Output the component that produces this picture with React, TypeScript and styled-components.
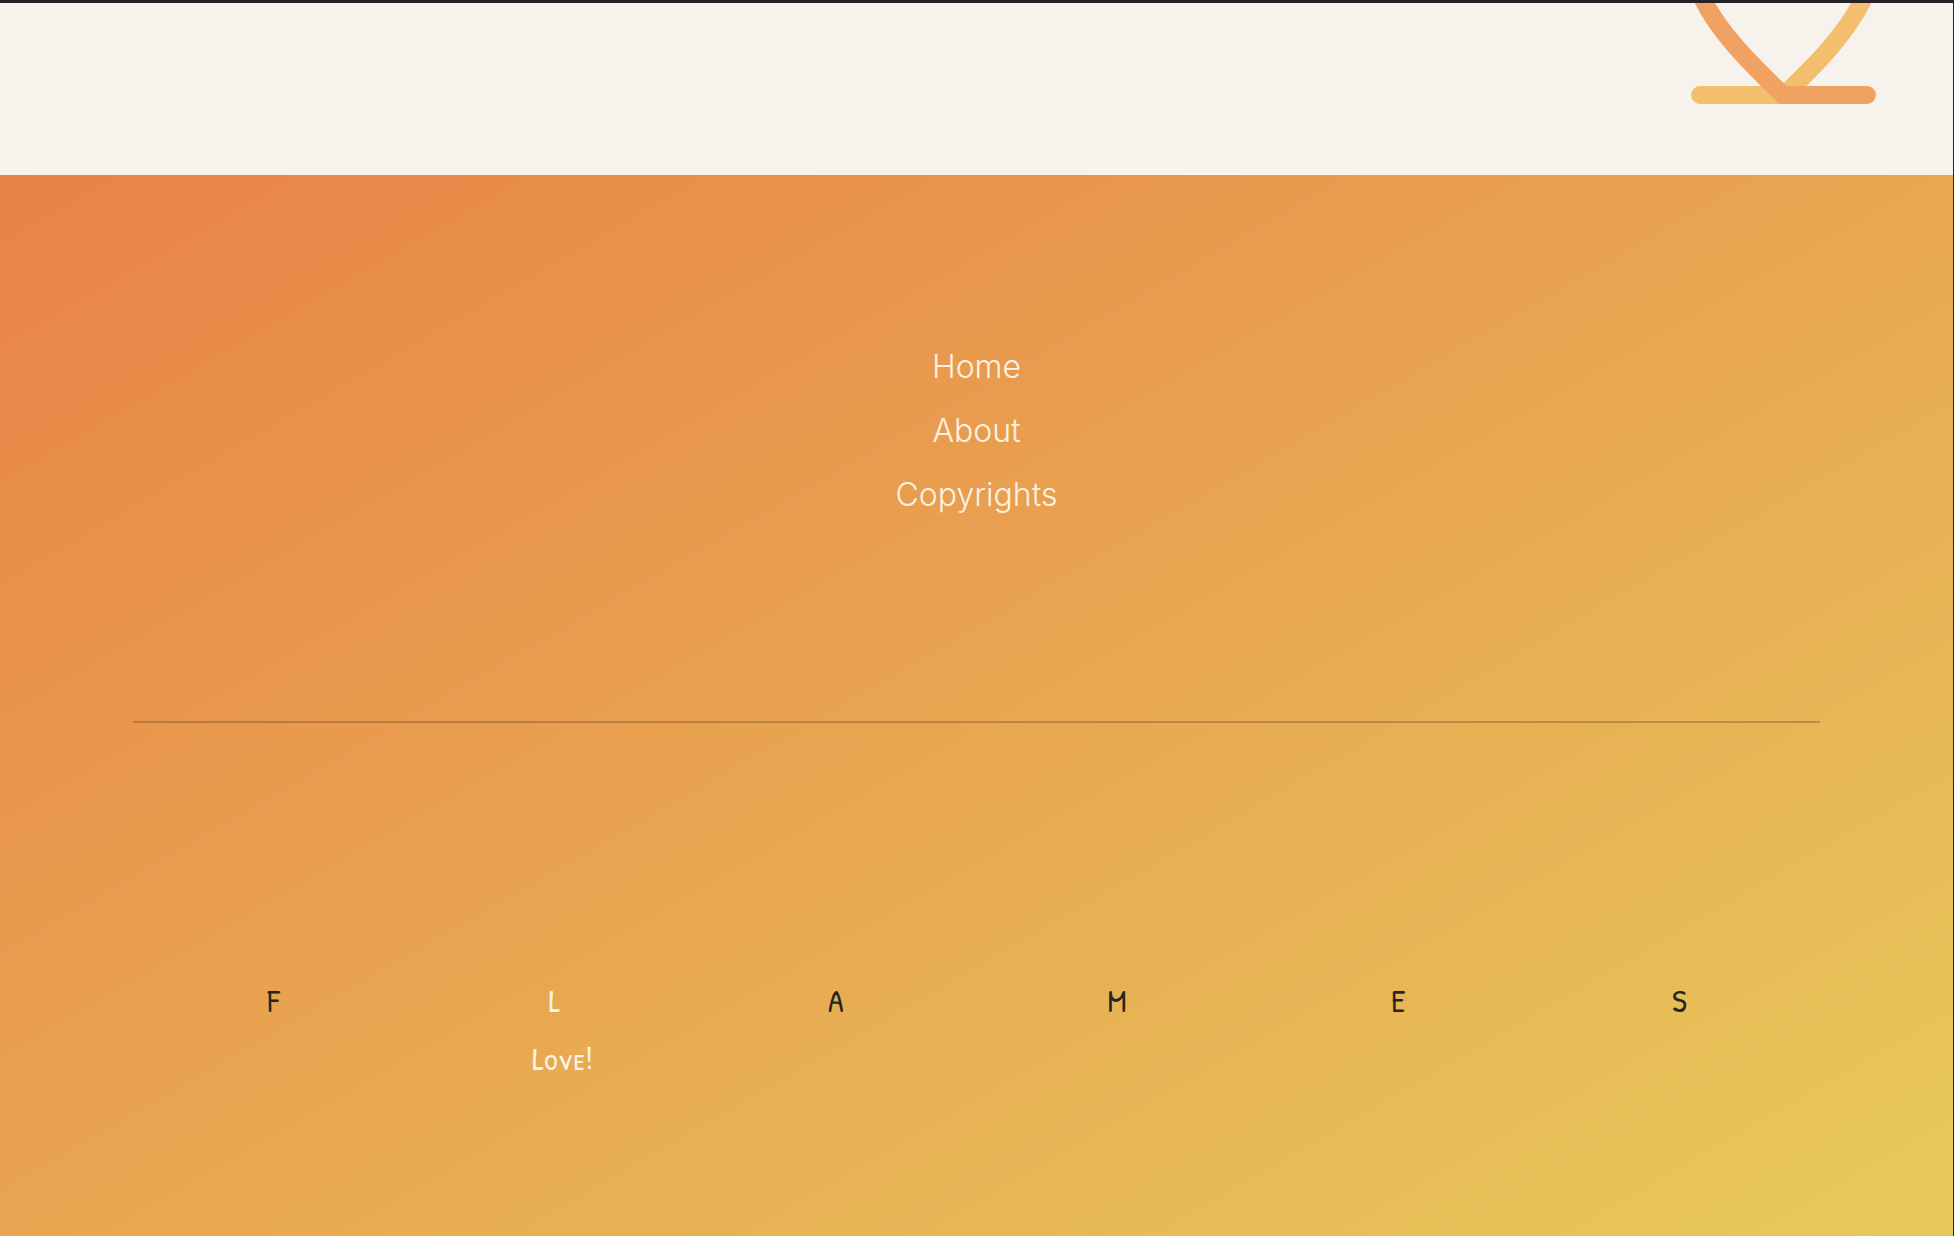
import React from "react";
import styled, { createGlobalStyle } from "styled-components";

const GlobalStyle = createGlobalStyle`
  * { box-sizing: border-box; }
  html, body { margin: 0; }
  body { font-family: Inter, "Liberation Sans", Arial, sans-serif; }
`;

const Page = styled.div`
  display: flex;
  flex-direction: column;
  min-height: 100vh;
  border-top: 3px solid #242328;
  border-right: 1px solid #2b211c;
  background: #f7f2ec;
`;

const Intro = styled.section`
  display: flex;
  justify-content: flex-end;
  height: 172px;
  padding-right: 77px;
`;

const Ornament = styled.svg`
  width: 186px;
  height: 102px;
`;

const Footer = styled.footer`
  flex: 1;
  padding: 160px 133px 120px;
  background: linear-gradient(150deg, #e98247, #e7cb5b 102%);
`;

const Nav = styled.nav`
  display: flex;
  flex-direction: column;
  align-items: center;
`;

const NavLink = styled.a`
  color: #fdf1e2;
  font-size: 32px;
  font-weight: 300;
  line-height: 64px;
  text-decoration: none;
`;

const Divider = styled.hr`
  height: 2px;
  margin: 194px 0 0;
  border: 0;
  background: rgba(60, 40, 20, 0.27);
`;

const Letters = styled.ul`
  display: grid;
  grid-template-columns: repeat(6, 1fr);
  margin: 0;
  padding: 249px 0 0;
  list-style: none;
`;

const Letter = styled.li<{ $active?: boolean }>`
  display: flex;
  flex-direction: column;
  align-items: center;
  color: ${(p) => (p.$active ? "#fdf3e6" : "#26261f")};
  font-family: "Patrick Hand SC", "Roboto Condensed", "Open Sans Condensed", "Open Sans", sans-serif;
  font-size: 32px;
  font-weight: 600;
  line-height: 58px;
`;

const Meaning = styled.span`
  padding-left: 16px;
  font-variant: small-caps;
`;

const links = ["Home", "About", "Copyrights"];
const letters = [
  { letter: "F" },
  { letter: "L", meaning: "Love!" },
  { letter: "A" },
  { letter: "M" },
  { letter: "E" },
  { letter: "S" },
];

export default function App() {
  return (
    <>
      <GlobalStyle />
      <Page>
        <Intro>
          <Ornament viewBox="0 0 186 102" fill="none" strokeWidth="18" strokeLinecap="round" strokeLinejoin="round" aria-hidden="true">
            <path d="M176 -10 C160 27 128 60 94 92 H10" stroke="#f4be6f" />
            <path d="M10 -10 C26 27 60 60 93 92 H177" stroke="#f0a263" />
          </Ornament>
        </Intro>
        <Footer>
          <Nav>
            {links.map((label) => (
              <NavLink key={label} href="#">{label}</NavLink>
            ))}
          </Nav>
          <Divider />
          <Letters>
            {letters.map(({ letter, meaning }) => (
              <Letter key={letter} $active={Boolean(meaning)}>
                <span>{letter}</span>
                {meaning && <Meaning>{meaning}</Meaning>}
              </Letter>
            ))}
          </Letters>
        </Footer>
      </Page>
    </>
  );
}
